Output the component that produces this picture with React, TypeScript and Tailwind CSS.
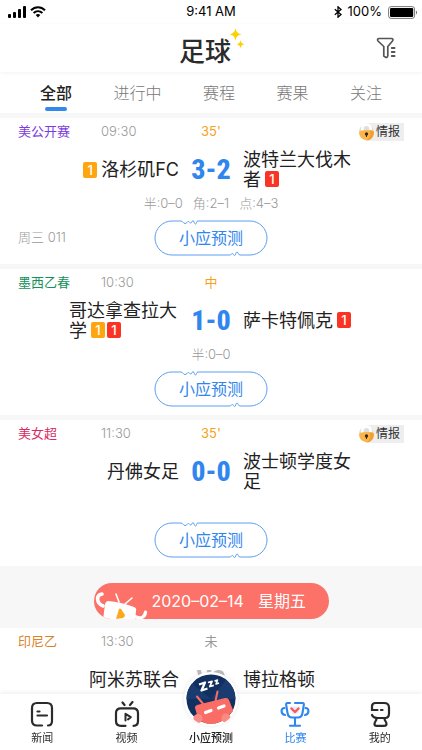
import { useState, type ReactNode } from 'react'
import { clsx } from 'clsx'

type Card = 'yellow' | 'red'

type Team = {
  name: string
  cards?: Card[]
}

type Match = {
  id: string
  league: string
  leagueColor: string
  time: string
  status: string
  live: boolean
  intel?: boolean
  home: Team
  away: Team
  score: string
  stats?: string[]
  round?: string
}

const TABS = ['全部', '进行中', '赛程', '赛果', '关注']

const MATCHES: Match[] = [
  {
    id: 'lafc',
    league: '美公开赛',
    leagueColor: 'text-[#7a3be0]',
    time: '09:30',
    status: "35'",
    live: true,
    intel: true,
    home: { name: '洛杉矶FC', cards: ['yellow'] },
    away: { name: '波特兰大伐木者', cards: ['red'] },
    score: '3-2',
    stats: ['半:0–0', '角:2–1', '点:4–3'],
    round: '周三 011'
  },
  {
    id: 'guadalajara',
    league: '墨西乙春',
    leagueColor: 'text-[#15915a]',
    time: '10:30',
    status: '中',
    live: true,
    home: { name: '哥达拿查拉大学', cards: ['yellow', 'red'] },
    away: { name: '萨卡特佩克', cards: ['red'] },
    score: '1-0',
    stats: ['半:0–0']
  },
  {
    id: 'denver',
    league: '美女超',
    leagueColor: 'text-[#d92b62]',
    time: '11:30',
    status: "35'",
    live: true,
    intel: true,
    home: { name: '丹佛女足' },
    away: { name: '波士顿学度女足' },
    score: '0-0'
  }
]

const UPCOMING: Match = {
  id: 'amisu',
  league: '印尼乙',
  leagueColor: 'text-[#d9822b]',
  time: '13:30',
  status: '未',
  live: false,
  home: { name: '阿米苏联合' },
  away: { name: '博拉格顿' },
  score: 'VS'
}

function StatusBar() {
  return (
    <div className="grid h-6 shrink-0 grid-cols-3 items-center px-2 text-[13px] text-black">
      <div className="flex items-center gap-1">
        <svg width="18" height="12" viewBox="0 0 18 12" fill="currentColor">
          <rect x="0" y="8" width="3" height="4" rx="1" />
          <rect x="5" y="6" width="3" height="6" rx="1" />
          <rect x="10" y="3" width="3" height="9" rx="1" />
          <rect x="15" y="0" width="3" height="12" rx="1" />
        </svg>
        <svg width="16" height="12" viewBox="0 0 16 12" fill="none" stroke="currentColor" strokeWidth="2">
          <path d="M1 4.300C5 .2 11 .2 15 4.300" />
          <path d="M3.600 7C6.200 4.500 9.800 4.500 12.400 7" />
          <path d="M5.700 8.900C7 7.800 9 7.800 10.300 8.900L8 11.500Z" fill="currentColor" stroke="none" />
        </svg>
      </div>
      <span className="text-center">9:41 AM</span>
      <div className="-mr-1 flex items-center justify-end gap-1.5">
        <svg width="8" height="12" viewBox="0 0 8 12" fill="none" stroke="currentColor" strokeWidth="1.300">
          <path d="M.8 3.200L7 8.600L4 11.200V.8L7 3.400L.8 8.800" />
        </svg>
        <span>100%</span>
        <svg width="30" height="13" viewBox="0 0 30 13">
          <rect x=".6" y=".6" width="26" height="11.800" rx="2.500" fill="none" stroke="#777" />
          <rect x="2" y="2" width="23.200" height="9" rx="1.200" fill="#000" />
          <path d="M28 4.500C29.400 5 29.400 8 28 8.500Z" fill="#777" />
        </svg>
      </div>
    </div>
  )
}

function Sparkles() {
  return (
    <svg className="absolute top-1 left-full -ml-0.5" width="16" height="22" viewBox="0 0 16 22" fill="#fdd000">
      <path d="M6.500 0C7.300 4 8.500 5.300 12.500 6.300C8.500 7.300 7.300 8.600 6.500 12.600C5.700 8.600 4.500 7.300.5 6.300C4.500 5.300 5.700 4 6.500 0Z" />
      <path d="M11.500 12C12 14.800 12.900 15.600 15.700 16.200C12.900 16.800 12 17.600 11.500 20.400C11 17.600 10.100 16.800 7.300 16.200C10.100 15.600 11 14.800 11.500 12Z" />
    </svg>
  )
}

function Header() {
  return (
    <header className="relative z-10 grid h-12 shrink-0 grid-cols-[1fr_auto_1fr] items-center bg-white px-6 shadow-[0_1px_4px_rgba(0,0,0,0.05)]">
      <h1 className="relative col-start-2 -ml-3 pt-2 text-[26px] leading-10 font-medium text-[#2b2b2b]">
        足球
        <Sparkles />
      </h1>
      <button type="button" aria-label="筛选" className="justify-self-end text-[#555]">
        <svg width="22" height="22" viewBox="0 0 22 22" fill="none" stroke="currentColor" strokeWidth="1.700" strokeLinecap="round" strokeLinejoin="round">
          <path d="M3 1.500H15.500C17 1.500 17.400 3 16.500 4L11.800 9.500V18.500C11.800 20.300 10.500 20.800 9.300 20L7.800 19V9.500L2 4C1.200 3 1.500 1.500 3 1.500Z" />
          <path d="M15.800 11H18.500M15.800 15H18.500M15.800 19H18.500" strokeWidth="2" />
        </svg>
      </button>
    </header>
  )
}

function TabBar() {
  const [active, setActive] = useState(TABS[0])
  return (
    <div className="flex h-[41px] shrink-0 justify-between bg-white px-10 text-base">
      {TABS.map((tab) => (
        <button
          key={tab}
          type="button"
          onClick={() => setActive(tab)}
          className={clsx(
            'flex flex-col items-center gap-0.5',
            tab === active ? 'font-medium text-[#222]' : 'font-light text-[#777]'
          )}
        >
          <span className="mt-[9px] leading-6">{tab}</span>
          {tab === active && <span className="h-1 w-[22px] rounded-full bg-[#3388ee]" />}
        </button>
      ))}
    </div>
  )
}

function CardBadge({ kind }: { kind: Card }) {
  return (
    <span
      className={clsx(
        'block h-4 w-3.5 rounded-[2px] text-center text-[13px] leading-4 font-medium text-white',
        kind === 'yellow' ? 'bg-[#ffa510]' : 'bg-[#fa3424]'
      )}
    >
      1
    </span>
  )
}

function Cards({ cards }: { cards: Card[] }) {
  return (
    <span className="mx-1 inline-flex gap-0.5 align-[2px] leading-4">
      {cards.map((kind) => (
        <CardBadge key={kind} kind={kind} />
      ))}
    </span>
  )
}

function IntelBadge() {
  return (
    <button
      type="button"
      className="flex h-[18px] items-center gap-0.5 rounded-[5px] rounded-l-full bg-[#eee] pr-1 text-xs text-[#333]"
    >
      <svg width="15" height="18" viewBox="0 0 15 18">
        <circle cx="7.500" cy="9" r="7.500" fill="#dedede" />
        <path d="M3.400 9V5.500C3.400 .3 11.600 .3 11.600 5.500V9" fill="none" stroke="#fff" strokeWidth="2.600" />
        <path d="M.6 8Q7.500 6 14.400 8A7.200 7.200 0 1 1 .6 8Z" fill="#fcb548" />
        <path d="M10.500 7.200Q13 7.400 14.400 8A7.200 7.200 0 0 1 7.500 17.400Q13 14 10.500 7.200Z" fill="#f59d2e" />
        <circle cx="7.500" cy="11" r="1.700" fill="#3a2a18" />
        <path d="M7 11H8V14H7Z" fill="#3a2a18" />
      </svg>
      情报
    </button>
  )
}

function PredictButton() {
  return (
    <button
      type="button"
      className="relative h-9 w-[114px] text-base text-[#2f86ee]"
    >
      <svg
        className="absolute inset-0"
        width="114"
        height="36"
        viewBox="0 0 114 36"
        fill="none"
        stroke="#5c9ff0"
        strokeLinejoin="round"
      >
        <path d="M18 1H27C29 1 29 3.500 31 3.500C33 3.500 33 1.500 34.500 1.500C35.500 1.500 35.500 3 36.500 3C38 3 38 .5 39 .5C40.200 .5 40 4 41.500 4C43 4 42 1 44 1H96A17 17 0 0 1 96 35H86C84 35 84.500 32 83 32C81.500 32 82 35.500 80.500 35.500C79.300 35.500 79.500 33.500 78.500 33.500C77.500 33.500 77.500 35 75 35H18A17 17 0 0 1 18 1Z" />
      </svg>
      小应预测
    </button>
  )
}

function MatchCard({ match }: { match: Match }) {
  const { home, away } = match
  return (
    <article className="shrink-0 bg-white px-[18px] pb-2">
      <div className="grid h-7 grid-cols-[1fr_64px_1fr] items-center text-[13px]">
        <div className="flex">
          <span className={clsx('w-[83px]', match.leagueColor)}>{match.league}</span>
          <time className="font-light text-[#999]">{match.time}</time>
        </div>
        <span className={clsx('text-center', match.live ? 'text-[#f9a11b]' : 'text-[#999]')}>{match.status}</span>
        <div className="flex justify-end">{match.intel && <IntelBadge />}</div>
      </div>

      <div className="grid min-h-12 grid-cols-[1fr_64px_1fr] items-center text-lg leading-5 text-[#222]">
        <div className="flex items-center justify-end">
          {home.cards?.length === 1 && <Cards cards={home.cards} />}
          <span className="max-w-[110px]">
            {home.name}
            {home.cards && home.cards.length > 1 && <Cards cards={home.cards} />}
          </span>
        </div>
        <strong
          className={clsx(
            "text-center font-['Roboto_Condensed','Liberation_Sans_Narrow',sans-serif] leading-7",
            match.live ? 'text-[28px] font-extrabold text-[#2f86ee]' : 'text-[26px] font-bold text-[#bbb]'
          )}
        >
          {match.score}
        </strong>
        <span className="max-w-[114px]">
          {away.name}
          {away.cards && <Cards cards={away.cards} />}
        </span>
      </div>

      <div className="flex h-5 items-center justify-center gap-2.5 text-[13px] font-light text-[#999]">
        {match.stats?.map((stat) => (
          <span key={stat}>{stat}</span>
        ))}
      </div>

      {match.live && (
        <div className="mt-1.5 grid grid-cols-[1fr_auto_1fr] items-center">
          <span className="text-[13px] font-light text-[#999]">{match.round}</span>
          <PredictButton />
        </div>
      )}
    </article>
  )
}

function DateBanner() {
  return (
    <div className="flex shrink-0 justify-center pt-[17px] pb-[9px]">
      <div className="flex h-9 w-[235px] items-center gap-1 overflow-hidden rounded-full bg-[#fc7168] text-white">
        <svg className="shrink-0" width="54" height="36" viewBox="0 0 54 36" fill="none" stroke="#fff" strokeLinecap="round">
          <path d="M8 11C2 12 2 20 9 23" strokeWidth="3.600" />
          <path d="M22 11L25 19M38 15L31 21" strokeWidth="1.600" />
          <path d="M14 18Q27 19 40 24Q43 25 42 28L41 37H9L11 21Q12 18 14 18Z" fill="#fff" stroke="none" />
          <path d="M40 33C47 37 51 34 51.500 29" strokeWidth="3.200" />
          <path d="M25 26Q26 25 27 26L31 32Q31 34 29 35L22 36Z" fill="#fba919" stroke="none" />
        </svg>
        <span className="text-base">2020–02–14</span>
        <span className="ml-2.5 text-base">星期五</span>
      </div>
    </div>
  )
}

function NewsIcon() {
  return (
    <svg width="26" height="26" viewBox="0 0 26 26" fill="none" stroke="currentColor" strokeWidth="2.200" strokeLinecap="round">
      <path d="M13 24.500H8C4.500 24.500 3 23 3 19.500V7C3 3.500 4.500 2 8 2H18C21.500 2 23 3.500 23 7V20C23 23 22 24.500 19 24.500" />
      <path d="M8.500 10.500H10.500M8.500 14.500H18" />
    </svg>
  )
}

function VideoIcon() {
  return (
    <svg width="26" height="26" viewBox="0 0 26 26" fill="none" stroke="currentColor" strokeWidth="2.200" strokeLinecap="round" strokeLinejoin="round">
      <path d="M8.500 1.500L10.500 4M18.500 1L16 4" />
      <path d="M11.500 24.800H7C3.500 24.800 2 23.500 2 20V12C2 8.500 3.500 7.300 7 7.300H19C22.500 7.300 24 8.500 24 12V20C24 23 23 24.800 19.500 24.800" />
      <path d="M11.500 19.500V12.800L16.800 16.200L14 18.400" strokeWidth="2" />
    </svg>
  )
}

function TrophyIcon() {
  return (
    <svg width="30" height="26" viewBox="0 0 30 26" fill="none" stroke="currentColor" strokeWidth="2.100" strokeLinecap="round" strokeLinejoin="round">
      <path d="M10 2H7.500C6.300 2 6 2.800 6.200 4L7.500 12C8 15 9 16.500 12 16.500H18C21 16.500 22 15 22.500 12L23.800 4C24 2.800 23.700 2 22.500 2H15" />
      <path d="M4.500 7C.5 7 .5 13 5 14M25.500 7C29.500 7 29.500 13 25 14" />
      <path d="M15 17V24.500M10 24.700H20" />
      <path d="M9.800 5.500H20.200L19 11Q18 13 15 13.500Q12 13 11 11Z" fill="#e2ecfb" stroke="none" />
      <path d="M11.500 7.500L15 11L18.500 7.500" stroke="#fb5a55" strokeWidth="2.400" />
    </svg>
  )
}

function MineIcon() {
  return (
    <svg width="26" height="26" viewBox="0 0 26 26" fill="none" stroke="currentColor" strokeWidth="2.200" strokeLinecap="round" strokeLinejoin="round">
      <path d="M5 9V5.500C5 3 6 2 8.500 2H17C20.500 2 22 3.500 22 6.500V12.500C22 15.500 20.500 17 18 17H11C7.500 17 6 16.500 5 14" />
      <path d="M5 9H10.500M14 9H15.500" />
      <path d="M9.500 17.500C9.500 20 7.500 20.500 7.500 23C7.500 24.300 8.500 24.800 9.500 24.800H17C18.500 24.800 19.500 24.300 19.500 23C19.500 20.500 17.500 20 17.500 17.500" />
    </svg>
  )
}

function RobotAvatar() {
  return (
    <svg className="rounded-full bg-white shadow-[0_0_4px_rgba(0,0,0,0.1)]" width="54" height="54" viewBox="0 0 54 54">
      <circle cx="27" cy="27" r="24.500" fill="#12305f" />
      <path d="M27 27L42 7.700A24.500 24.500 0 0 1 51.500 27Z" fill="#1a3b70" />
      <path d="M27 27L8 11.500A24.500 24.500 0 0 0 2.500 27Z" fill="#1a3b70" />
      <g fill="none" stroke="#fff" strokeLinejoin="round">
        <path d="M15 12.500L21 10.500L17.500 18.500L23.500 16.500" strokeWidth="2.300" />
        <path d="M24 10.500L28 9.300L25.800 14.500L29.800 13.300" strokeWidth="1.800" />
        <path d="M30.500 9L33.500 8L32 12L35 11" strokeWidth="1.500" />
      </g>
      <path d="M13 24.500L20 33M33.500 19.500L31.500 29" stroke="#f96c66" strokeWidth="2" strokeLinecap="round" />
      <path d="M11 36Q10.500 34 13 33L41 26Q44 25.500 45 28L49 38Q49.500 40 47 41L43 45Q36 52 27 52Q19 52 14 46Z" fill="#fa6d66" />
      <circle cx="14" cy="46.500" r="4.500" fill="#fb8a84" />
      <circle cx="42" cy="46" r="4.500" fill="#fb8a84" />
      <path d="M21.500 40.500L27 38.500M34.500 36L40 34" stroke="#fff" strokeWidth="3.200" strokeLinecap="round" />
    </svg>
  )
}

function NavItem({ icon, label, active }: { icon: ReactNode; label: string; active?: boolean }) {
  return (
    <a
      href="#"
      className={clsx('flex flex-col items-center pt-[7px] text-[11px]', active ? 'text-[#2f86ee]' : 'text-[#2b2b2b]')}
    >
      {icon}
      <span className="mt-0.5 leading-[18px]">{label}</span>
    </a>
  )
}

function BottomNav() {
  return (
    <nav className="relative z-10 grid h-14 shrink-0 grid-cols-5 bg-white shadow-[0_-1px_5px_rgba(0,0,0,0.08)]">
      <NavItem icon={<NewsIcon />} label="新闻" />
      <NavItem icon={<VideoIcon />} label="视频" />
      <a href="#" className="-mt-[22px] flex flex-col items-center text-[11px] font-medium text-[#222]">
        <RobotAvatar />
        <span className="mt-1 leading-4">小应预测</span>
      </a>
      <NavItem icon={<TrophyIcon />} label="比赛" active />
      <NavItem icon={<MineIcon />} label="我的" />
    </nav>
  )
}

export default function App() {
  return (
    <div className="flex h-screen flex-col bg-white font-[Inter,'Noto_Sans_CJK_SC',sans-serif]">
      <StatusBar />
      <Header />
      <TabBar />
      <main className="flex min-h-0 flex-1 flex-col overflow-y-auto bg-[#f7f7f7] pt-[5px] [scrollbar-width:none]">
        <div className="flex flex-col gap-[5px]">
          {MATCHES.map((match) => (
            <MatchCard key={match.id} match={match} />
          ))}
        </div>
        <DateBanner />
        <MatchCard match={UPCOMING} />
      </main>
      <BottomNav />
    </div>
  )
}
